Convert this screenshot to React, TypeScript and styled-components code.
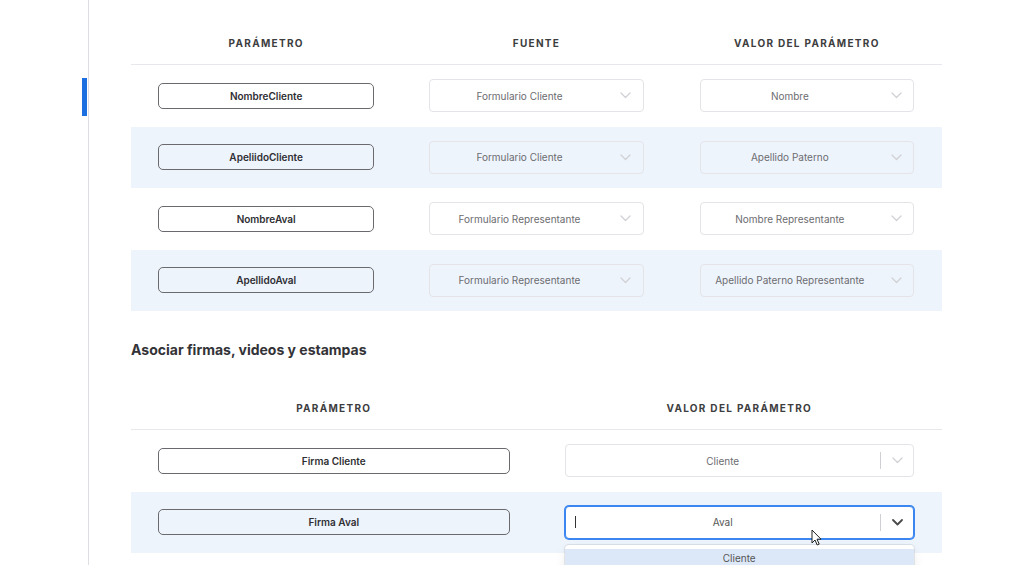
import React from 'react';
import styled, { createGlobalStyle } from 'styled-components';

interface IParamRow {
  name: string;
  source?: string;
  value: string;
}

const mainRows: IParamRow[] = [
  { name: 'NombreCliente', source: 'Formulario Cliente', value: 'Nombre' },
  { name: 'ApeliidoCliente', source: 'Formulario Cliente', value: 'Apellido Paterno' },
  { name: 'NombreAval', source: 'Formulario Representante', value: 'Nombre Representante' },
  { name: 'ApellidoAval', source: 'Formulario Representante', value: 'Apellido Paterno Representante' },
];

const signRows: IParamRow[] = [
  { name: 'Firma Cliente', value: 'Cliente' },
  { name: 'Firma Aval', value: 'Aval' },
];

function Chevron({ $active }: { $active?: boolean }): React.ReactElement {
  return (
    <svg width="11" height="7" viewBox="0 0 11 7" fill="none">
      <path
        d="M1 1l4.5 4.5L10 1"
        stroke={$active ? '#4a4a4a' : '#cfcfd4'}
        strokeWidth={$active ? 1.8 : 1.2}
        strokeLinecap="round"
        strokeLinejoin="round"
      />
    </svg>
  );
}

function Pointer(): React.ReactElement {
  return (
    <MouseCursor width="11" height="17" viewBox="0 0 11 17">
      <path d="M1 1v13l3-3 2.2 5 2-0.9-2.2-4.9H10L1 1z" fill="#fff" stroke="#222" strokeWidth="1" strokeLinejoin="round" />
    </MouseCursor>
  );
}

function App(): React.ReactElement {
  return (
    <>
      <GlobalStyle />
      <Page>
        <Sidebar>
          <ActiveMark />
        </Sidebar>
        <Main>
          <Table>
            <HeaderRow $cols={3}>
              <HeaderCell>Parámetro</HeaderCell>
              <HeaderCell>Fuente</HeaderCell>
              <HeaderCell>Valor del parámetro</HeaderCell>
            </HeaderRow>
            {mainRows.map((row, i) => (
              <Row key={row.name} $cols={3} $shaded={i % 2 === 1}>
                <Cell>
                  <ParamBox>{row.name}</ParamBox>
                </Cell>
                <Cell $select>
                  <Select>
                    <SelectValue>{row.source}</SelectValue>
                    <Indicator $w={34}>
                      <Chevron />
                    </Indicator>
                  </Select>
                </Cell>
                <Cell $select>
                  <Select>
                    <SelectValue>{row.value}</SelectValue>
                    <Indicator $w={34}>
                      <Chevron />
                    </Indicator>
                  </Select>
                </Cell>
              </Row>
            ))}
          </Table>

          <SectionTitle>Asociar firmas, videos y estampas</SectionTitle>

          <Table>
            <HeaderRow $cols={2}>
              <HeaderCell>Parámetro</HeaderCell>
              <HeaderCell>Valor del parámetro</HeaderCell>
            </HeaderRow>
            {signRows.map((row, i) => {
              const focused = i === 1;
              return (
                <Row key={row.name} $cols={2} $shaded={i % 2 === 1}>
                  <Cell>
                    <ParamBox>{row.name}</ParamBox>
                  </Cell>
                  <Cell $select>
                    <SelectWrap>
                      <Select $white $focused={focused}>
                        <SelectValue $dark={focused}>
                          {focused && <Caret />}
                          {row.value}
                        </SelectValue>
                        <Separator />
                        <Indicator $w={32}>
                          <Chevron $active={focused} />
                        </Indicator>
                      </Select>
                      {focused && (
                        <>
                          <Pointer />
                          <Menu>
                            <MenuOption $highlighted>Cliente</MenuOption>
                          </Menu>
                        </>
                      )}
                    </SelectWrap>
                  </Cell>
                </Row>
              );
            })}
          </Table>
        </Main>
      </Page>
    </>
  );
}

const GlobalStyle = createGlobalStyle`
  * { box-sizing: border-box; }
  body {
    margin: 0;
    background: #ffffff;
    font-family: 'Inter', 'Noto Sans', sans-serif;
    color: #333;
  }
`;

const Page = styled.div`
  display: flex;
  height: 565px;
  overflow: hidden;
`;

const Sidebar = styled.aside`
  width: 89px;
  flex-shrink: 0;
  display: flex;
  flex-direction: column;
  border-right: 1px solid #dedee2;
`;

const ActiveMark = styled.div`
  align-self: flex-end;
  width: 5px;
  height: 38px;
  margin-top: 78px;
  margin-right: 1px;
  background: #1b6fe0;
`;

const Main = styled.main`
  flex: 1;
  padding: 22px 82px 0 42px;
  overflow: hidden;
`;

const Table = styled.div`
  display: flex;
  flex-direction: column;
`;

const HeaderRow = styled.div<{ $cols: number }>`
  display: grid;
  grid-template-columns: repeat(${({ $cols }) => $cols}, 1fr);
  height: 43px;
  border-bottom: 1px solid #e7e7ec;
`;

const HeaderCell = styled.div`
  display: flex;
  align-items: center;
  justify-content: center;
  font-size: 10px;
  font-weight: 700;
  letter-spacing: 1.3px;
  text-transform: uppercase;
  color: #3d3d40;
`;

const Row = styled.div<{ $cols: number; $shaded: boolean }>`
  display: grid;
  grid-template-columns: repeat(${({ $cols }) => $cols}, 1fr);
  height: 61.5px;
  background: ${({ $shaded }) => ($shaded ? '#eef4fc' : 'transparent')};
`;

const Cell = styled.div<{ $select?: boolean }>`
  display: flex;
  align-items: center;
  justify-content: center;
  padding: 0 ${({ $select }) => ($select ? '28px' : '27px')};
`;

const ParamBox = styled.div`
  width: 100%;
  height: 26px;
  display: flex;
  align-items: center;
  justify-content: center;
  border: 1px solid #6a6a6e;
  border-radius: 5px;
  font-size: 10px;
  font-weight: 600;
  color: #2f2f33;
`;

const SelectWrap = styled.div`
  position: relative;
  width: 100%;
`;

const Select = styled.div<{ $white?: boolean; $focused?: boolean }>`
  width: 100%;
  height: 33px;
  display: flex;
  align-items: center;
  border-radius: 4px;
  background: ${({ $white }) => ($white ? '#ffffff' : 'transparent')};
  border: 1px solid ${({ $focused }) => ($focused ? '#3b86f0' : '#e4e4e8')};
  box-shadow: ${({ $focused }) => ($focused ? '0 0 0 1px #3b86f0' : 'none')};
`;

const SelectValue = styled.div<{ $dark?: boolean }>`
  position: relative;
  flex: 1;
  text-align: center;
  font-size: 10px;
  color: ${({ $dark }) => ($dark ? '#555' : '#6c6c70')};
  white-space: nowrap;
  overflow: hidden;
`;

const Caret = styled.span`
  position: absolute;
  left: 9px;
  top: 50%;
  width: 1px;
  height: 13px;
  margin-top: -7px;
  background: #333;
`;

const Separator = styled.span`
  width: 1px;
  height: 17px;
  background: #cfcfd4;
`;

const Indicator = styled.div<{ $w: number }>`
  width: ${({ $w }) => $w}px;
  display: flex;
  align-items: center;
  justify-content: center;
`;

const SectionTitle = styled.h2`
  margin: 28px 0 26px;
  font-size: 14px;
  line-height: 22px;
  font-weight: 700;
  color: #333337;
`;

const MouseCursor = styled.svg`
  position: absolute;
  left: 246px;
  top: 23px;
  z-index: 3;
`;

const Menu = styled.div`
  position: absolute;
  top: calc(100% + 6px);
  left: 0;
  width: 100%;
  padding: 4px 0;
  background: #ffffff;
  border-radius: 4px;
  box-shadow: 0 0 0 1px rgba(0, 0, 0, 0.08), 0 4px 11px rgba(0, 0, 0, 0.08);
  z-index: 2;
`;

const MenuOption = styled.div<{ $highlighted?: boolean }>`
  padding: 3px 12px 8px;
  text-align: center;
  font-size: 10px;
  line-height: 12px;
  color: #555;
  background: ${({ $highlighted }) => ($highlighted ? '#dce8f8' : 'transparent')};
`;

export default App;
